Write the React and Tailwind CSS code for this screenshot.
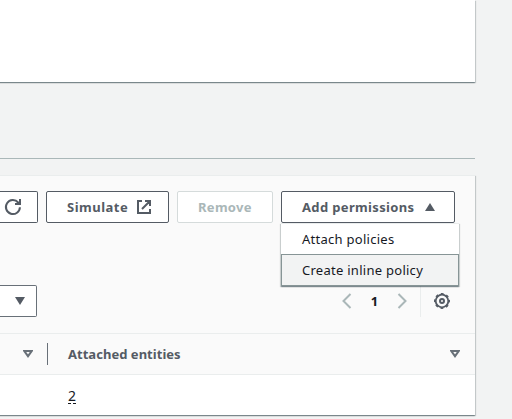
const button =
  'flex h-8 shrink-0 items-center rounded-[2px] border bg-white text-[13px] font-bold';

const card =
  'shadow-[0_1px_1px_0_rgba(0,28,36,0.3),1px_1px_1px_0_rgba(0,28,36,0.15),-1px_1px_1px_0_rgba(0,28,36,0.15)]';

function Sort() {
  return (
    <svg width="10" height="8" viewBox="0 0 10 8" fill="none" stroke="#687078" strokeWidth="2">
      <path d="M1.3 1h7.4L5 6.2z" />
    </svg>
  );
}

function Toolbar() {
  return (
    <div className="flex h-8 gap-2">
      <button className={`${button} w-[38px] rounded-l-none border-l-0 border-[#545b64] pl-1`}>
        <svg width="18" height="18" viewBox="0 0 18 18" fill="none" stroke="#545b64" strokeWidth="2">
          <path d="M15.9 9.2a7 7 0 1 1-1.7-4.7l1.2 1.2M16 1v5h-5" />
        </svg>
      </button>
      <button className={`${button} w-[123px] border-[#545b64] pl-5 text-[#545b64]`}>
        <span className="w-[61px] shrink-0 pt-px whitespace-nowrap tracking-[0.5px]">Simulate</span>
        <svg className="ml-[8px] shrink-0" width="16" height="16" viewBox="0 0 16 16" fill="none" stroke="#545b64" strokeWidth="2">
          <path d="M6 2H2v12h12v-4M9 2h5v5M14 2L6 10" />
        </svg>
      </button>
      <button className={`${button} w-24 border-[#d5dbdb] pl-5 text-[#aab7b8]`}>
        <span className="pt-px tracking-[0.3px]">Remove</span>
      </button>
      <div className="relative">
        <button className={`${button} w-[174px] border-[#545b64] pl-5 text-[#545b64]`}>
          <span className="w-[112px] shrink-0 pt-px whitespace-nowrap tracking-[0.35px]">Add permissions</span>
          <svg className="ml-[11px] shrink-0" width="10" height="8" viewBox="0 0 10 8" fill="#545b64">
            <path d="M5 0l5 8H0z" />
          </svg>
        </button>
        <div className="absolute top-8 left-0 z-10 w-[178px] border-t border-[#eaeded] bg-white text-[13px] tracking-[0.27px] text-[#16191f] shadow-[0_1px_1px_0_rgba(0,28,36,0.3),1px_1px_1px_0_rgba(0,28,36,0.15),-1px_1px_1px_0_rgba(0,28,36,0.15)]">
          <div className="flex h-[30px] items-center px-[21px] pt-0.5">Attach policies</div>
          <div className="flex h-8 items-center border border-[#879596] bg-[#f2f3f3] px-5 pt-0.5 whitespace-nowrap">
            Create inline policy
          </div>
        </div>
      </div>
    </div>
  );
}

export default function App() {
  return (
    <div className="h-[419px] w-[512px] overflow-hidden bg-[#f2f3f3] font-['Noto_Sans',sans-serif] text-[#16191f]">
      <div className={`-ml-2 h-[82px] w-[483px] bg-white ${card}`} />
      <div className="h-[77px] w-[475px] border-b border-[#aab7b8]" />
      <section className={`-ml-2 mt-4 flex h-[240px] w-[483px] flex-col border-t border-[#eaeded] bg-[#fafafa] pl-2 ${card}`}>
        <div className="pt-[15px]">
          <Toolbar />
        </div>
        <div className="mt-[62px] flex h-8 items-center">
          <div className="flex h-8 w-[37px] items-center rounded-r-[2px] border border-l-0 border-[#687078] bg-white pl-[15px]">
            <svg width="10" height="8" viewBox="0 0 10 8" fill="#545b64">
              <path d="M0 0h10L5 8z" />
            </svg>
          </div>
          <div className="ml-auto flex h-8 items-center border-r border-[#eaeded] pr-[13px]">
            <svg width="10" height="16" viewBox="0 0 10 16" fill="none" stroke="#aab7b8" strokeWidth="2">
              <path d="M8.5 1L1.5 8l7 7" />
            </svg>
            <span className="w-[45px] pt-0.5 text-center text-[13px] font-bold">1</span>
            <svg width="10" height="16" viewBox="0 0 10 16" fill="none" stroke="#aab7b8" strokeWidth="2">
              <path d="M1.5 1l7 7-7 7" />
            </svg>
          </div>
          <svg className="mr-[25px] ml-[13px]" width="16" height="16" viewBox="0 0 16 16" fill="none" stroke="#545b64">
            <circle cx="8" cy="8" r="6.3" strokeWidth="1.8" />
            <circle cx="8" cy="8" r="7.3" strokeWidth="1.4" strokeDasharray="2.867 2.867" strokeDashoffset="1.433" />
            <circle cx="8" cy="8" r="2" strokeWidth="2" />
          </svg>
        </div>
        <div className="-ml-2 mt-4 flex h-[42px] items-center border-y border-[#eaeded] pl-2 text-[13px] font-bold text-[#545b64]">
          <div className="flex h-[22px] w-12 items-center border-r border-[#687078] pl-[23px]">
            <Sort />
          </div>
          <span className="ml-5 pt-0.5 tracking-[0.03px]">Attached entities</span>
          <div className="mr-[15px] ml-auto">
            <Sort />
          </div>
        </div>
        <div className="-ml-2 flex-1 bg-white pt-3 pl-[76px]">
          <span className="block h-[17px] w-2 border-b border-dashed border-[#16191f] text-[14px] leading-[17px]">2</span>
        </div>
      </section>
    </div>
  );
}
